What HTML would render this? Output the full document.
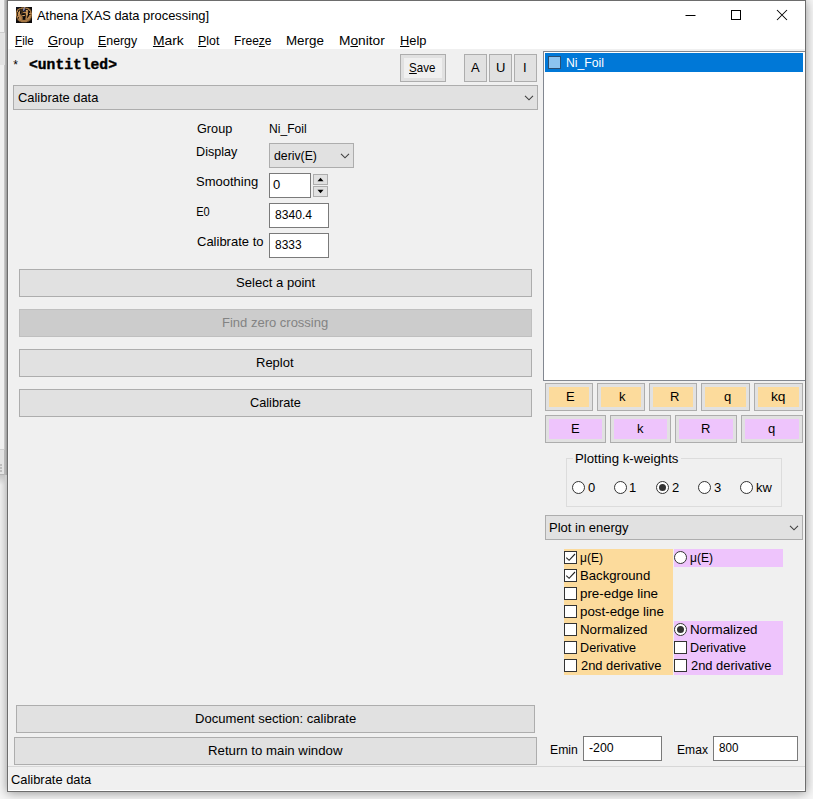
<!DOCTYPE html>
<html><head><meta charset="utf-8"><title>Athena [XAS data processing]</title>
<style>
*{box-sizing:border-box;margin:0;padding:0}
html,body{width:813px;height:799px;overflow:hidden;background:#f0f0f0}
body{position:relative;font:13px "Liberation Sans",sans-serif;color:#000}
.a{position:absolute}
.t{position:absolute;white-space:pre;line-height:16px;height:16px}
.btn{position:absolute;background:#e1e1e1;border:1px solid #adadad}
.btn.dis{background:#cccccc;border-color:#bfbfbf}
.inp{position:absolute;background:#fff;border:1px solid #7a7a7a}
.cmb{position:absolute;background:#e1e1e1;border:1px solid #adadad}
.cb{position:absolute;width:13px;height:13px;background:#fff;border:1px solid #333}
.rd{position:absolute;width:13px;height:13px;background:#fff;border:1px solid #333;border-radius:50%}
.dot{position:absolute;left:2px;top:2px;width:7px;height:7px;border-radius:50%;background:#333}
u{text-decoration:underline;text-underline-offset:1px;text-decoration-thickness:1px}
</style></head>
<body>
<div class="a" style="left:0;top:0;width:813px;height:799px;background:#f6f6f6"></div>
<div class="a" style="left:7px;top:0;width:799px;height:792px;border:1px solid #6d6d6d;background:#f0f0f0;box-shadow:0 1px 10px rgba(0,0,0,.4)"></div>
<div class="a" style="left:8px;top:49px;width:797px;height:742px;border:1px solid #fff;border-top:0;border-left-color:#f6f6f6;border-right-color:#f4f4f4"></div>
<div class="a" style="left:0;top:0;width:5px;height:475px;background:#f0f0f0;border-right:1px solid #c6c6c6"></div>
<div class="a" style="left:0;top:32px;width:5px;height:33px;background:#e3e3e3;border-top:1px solid #cdcdcd"></div>
<div class="a" style="left:0;top:449px;width:5px;height:26px;background:#e3e3e3;border-top:1px solid #d0d0d0;border-bottom:1px solid #b4b4b4;border-right:1px solid #b8b8b8"></div>
<div class="a" style="left:0;top:464px;width:2px;height:2px;background:#bdbdbd"></div>
<div class="a" style="left:0;top:467px;width:2px;height:2px;background:#bdbdbd"></div>
<div class="a" style="left:0;top:470px;width:2px;height:2px;background:#bdbdbd"></div>
<div class="a" style="left:0;top:475px;width:5px;height:10px;background:linear-gradient(to bottom,#c6c6c6,rgba(230,230,230,0))"></div>
<div class="a" style="left:5px;top:0;width:1px;height:475px;background:#b4b4b4"></div>
<div class="a" style="left:6px;top:0;width:1px;height:475px;background:#a2a2a2"></div>
<div class="a" style="left:8px;top:1px;width:797px;height:48px;background:#fff"></div>
<svg class="a" style="left:16px;top:7px" width="16" height="16" viewBox="0 0 16 16" shape-rendering="crispEdges"><rect width="16" height="16" fill="#0c0a0c"/><rect x="0" y="0" width="4" height="1" fill="#12121a"/><rect x="5" y="0" width="1" height="1" fill="#523920"/><rect x="6" y="0" width="2" height="1" fill="#70502c"/><rect x="8" y="0" width="1" height="1" fill="#8a8290"/><rect x="9" y="0" width="1" height="1" fill="#70502c"/><rect x="10" y="0" width="2" height="1" fill="#382918"/><rect x="0" y="1" width="2" height="1" fill="#12121a"/><rect x="2" y="1" width="1" height="1" fill="#382918"/><rect x="3" y="1" width="2" height="1" fill="#8c6636"/><rect x="5" y="1" width="1" height="1" fill="#a67744"/><rect x="6" y="1" width="1" height="1" fill="#8c6636"/><rect x="7" y="1" width="2" height="1" fill="#8a8290"/><rect x="9" y="1" width="1" height="1" fill="#70502c"/><rect x="10" y="1" width="2" height="1" fill="#a67744"/><rect x="12" y="1" width="1" height="1" fill="#8c6636"/><rect x="13" y="1" width="1" height="1" fill="#382918"/><rect x="1" y="2" width="1" height="1" fill="#70502c"/><rect x="2" y="2" width="1" height="1" fill="#a67744"/><rect x="3" y="2" width="1" height="1" fill="#70502c"/><rect x="4" y="2" width="3" height="1" fill="#382918"/><rect x="7" y="2" width="1" height="1" fill="#8a8290"/><rect x="8" y="2" width="1" height="1" fill="#6f6c8c"/><rect x="9" y="2" width="2" height="1" fill="#251c13"/><rect x="11" y="2" width="1" height="1" fill="#382918"/><rect x="12" y="2" width="1" height="1" fill="#a67744"/><rect x="13" y="2" width="1" height="1" fill="#8c6636"/><rect x="14" y="2" width="1" height="1" fill="#523920"/><rect x="0" y="3" width="1" height="1" fill="#382918"/><rect x="1" y="3" width="1" height="1" fill="#a67744"/><rect x="2" y="3" width="1" height="1" fill="#382918"/><rect x="3" y="3" width="1" height="1" fill="#523920"/><rect x="4" y="3" width="3" height="1" fill="#382918"/><rect x="7" y="3" width="1" height="1" fill="#6f6c8c"/><rect x="8" y="3" width="2" height="1" fill="#2c2c48"/><rect x="10" y="3" width="1" height="1" fill="#c9ab62"/><rect x="11" y="3" width="1" height="1" fill="#b98752"/><rect x="12" y="3" width="1" height="1" fill="#382918"/><rect x="13" y="3" width="1" height="1" fill="#a67744"/><rect x="14" y="3" width="1" height="1" fill="#8c6636"/><rect x="15" y="3" width="1" height="1" fill="#251c13"/><rect x="0" y="4" width="1" height="1" fill="#70502c"/><rect x="1" y="4" width="1" height="1" fill="#b98752"/><rect x="2" y="4" width="1" height="1" fill="#251c13"/><rect x="3" y="4" width="1" height="1" fill="#d09d5c"/><rect x="4" y="4" width="1" height="1" fill="#251c13"/><rect x="5" y="4" width="2" height="1" fill="#382918"/><rect x="7" y="4" width="1" height="1" fill="#251c13"/><rect x="8" y="4" width="1" height="1" fill="#2c2c48"/><rect x="9" y="4" width="1" height="1" fill="#523920"/><rect x="10" y="4" width="2" height="1" fill="#b98752"/><rect x="12" y="4" width="1" height="1" fill="#251c13"/><rect x="14" y="4" width="1" height="1" fill="#a67744"/><rect x="15" y="4" width="1" height="1" fill="#523920"/><rect x="0" y="5" width="1" height="1" fill="#8c6636"/><rect x="1" y="5" width="1" height="1" fill="#382918"/><rect x="2" y="5" width="1" height="1" fill="#b98752"/><rect x="3" y="5" width="1" height="1" fill="#d09d5c"/><rect x="5" y="5" width="1" height="1" fill="#382918"/><rect x="6" y="5" width="1" height="1" fill="#523920"/><rect x="7" y="5" width="1" height="1" fill="#a67744"/><rect x="8" y="5" width="2" height="1" fill="#b98752"/><rect x="10" y="5" width="1" height="1" fill="#d09d5c"/><rect x="11" y="5" width="1" height="1" fill="#b98752"/><rect x="12" y="5" width="2" height="1" fill="#251c13"/><rect x="14" y="5" width="1" height="1" fill="#a67744"/><rect x="15" y="5" width="1" height="1" fill="#70502c"/><rect x="0" y="6" width="1" height="1" fill="#a67744"/><rect x="1" y="6" width="1" height="1" fill="#382918"/><rect x="2" y="6" width="1" height="1" fill="#b98752"/><rect x="3" y="6" width="1" height="1" fill="#d09d5c"/><rect x="4" y="6" width="1" height="1" fill="#251c13"/><rect x="5" y="6" width="1" height="1" fill="#523920"/><rect x="6" y="6" width="1" height="1" fill="#382918"/><rect x="7" y="6" width="2" height="1" fill="#251c13"/><rect x="9" y="6" width="1" height="1" fill="#523920"/><rect x="10" y="6" width="1" height="1" fill="#d09d5c"/><rect x="11" y="6" width="1" height="1" fill="#b98752"/><rect x="13" y="6" width="2" height="1" fill="#b98752"/><rect x="15" y="6" width="1" height="1" fill="#a67744"/><rect x="0" y="7" width="1" height="1" fill="#a67744"/><rect x="1" y="7" width="1" height="1" fill="#382918"/><rect x="2" y="7" width="1" height="1" fill="#d09d5c"/><rect x="3" y="7" width="1" height="1" fill="#b98752"/><rect x="4" y="7" width="1" height="1" fill="#70502c"/><rect x="5" y="7" width="1" height="1" fill="#382918"/><rect x="8" y="7" width="1" height="1" fill="#251c13"/><rect x="9" y="7" width="1" height="1" fill="#382918"/><rect x="10" y="7" width="1" height="1" fill="#d09d5c"/><rect x="11" y="7" width="1" height="1" fill="#b98752"/><rect x="13" y="7" width="1" height="1" fill="#251c13"/><rect x="14" y="7" width="1" height="1" fill="#70502c"/><rect x="15" y="7" width="1" height="1" fill="#8c6636"/><rect x="0" y="8" width="1" height="1" fill="#a67744"/><rect x="1" y="8" width="1" height="1" fill="#382918"/><rect x="2" y="8" width="2" height="1" fill="#b98752"/><rect x="4" y="8" width="1" height="1" fill="#a67744"/><rect x="5" y="8" width="1" height="1" fill="#70502c"/><rect x="6" y="8" width="1" height="1" fill="#a67744"/><rect x="7" y="8" width="1" height="1" fill="#d09d5c"/><rect x="8" y="8" width="1" height="1" fill="#b98752"/><rect x="9" y="8" width="1" height="1" fill="#382918"/><rect x="10" y="8" width="1" height="1" fill="#b98752"/><rect x="11" y="8" width="1" height="1" fill="#70502c"/><rect x="13" y="8" width="1" height="1" fill="#a67744"/><rect x="14" y="8" width="1" height="1" fill="#b98752"/><rect x="15" y="8" width="1" height="1" fill="#8c6636"/><rect x="0" y="9" width="1" height="1" fill="#70502c"/><rect x="1" y="9" width="1" height="1" fill="#a67744"/><rect x="2" y="9" width="2" height="1" fill="#b98752"/><rect x="4" y="9" width="2" height="1" fill="#a67744"/><rect x="6" y="9" width="1" height="1" fill="#523920"/><rect x="7" y="9" width="1" height="1" fill="#251c13"/><rect x="9" y="9" width="1" height="1" fill="#382918"/><rect x="10" y="9" width="1" height="1" fill="#a67744"/><rect x="11" y="9" width="1" height="1" fill="#382918"/><rect x="12" y="9" width="1" height="1" fill="#523920"/><rect x="13" y="9" width="1" height="1" fill="#b98752"/><rect x="14" y="9" width="1" height="1" fill="#a67744"/><rect x="15" y="9" width="1" height="1" fill="#70502c"/><rect x="0" y="10" width="1" height="1" fill="#523920"/><rect x="1" y="10" width="1" height="1" fill="#a67744"/><rect x="2" y="10" width="1" height="1" fill="#382918"/><rect x="3" y="10" width="2" height="1" fill="#b98752"/><rect x="5" y="10" width="1" height="1" fill="#a67744"/><rect x="6" y="10" width="1" height="1" fill="#70502c"/><rect x="9" y="10" width="1" height="1" fill="#523920"/><rect x="10" y="10" width="1" height="1" fill="#a67744"/><rect x="11" y="10" width="1" height="1" fill="#382918"/><rect x="12" y="10" width="2" height="1" fill="#b98752"/><rect x="14" y="10" width="1" height="1" fill="#a67744"/><rect x="15" y="10" width="1" height="1" fill="#523920"/><rect x="0" y="11" width="1" height="1" fill="#251c13"/><rect x="1" y="11" width="2" height="1" fill="#70502c"/><rect x="3" y="11" width="2" height="1" fill="#b98752"/><rect x="5" y="11" width="1" height="1" fill="#a67744"/><rect x="6" y="11" width="1" height="1" fill="#70502c"/><rect x="9" y="11" width="1" height="1" fill="#70502c"/><rect x="10" y="11" width="2" height="1" fill="#a67744"/><rect x="12" y="11" width="1" height="1" fill="#b98752"/><rect x="13" y="11" width="1" height="1" fill="#a67744"/><rect x="14" y="11" width="1" height="1" fill="#70502c"/><rect x="15" y="11" width="1" height="1" fill="#251c13"/><rect x="1" y="12" width="1" height="1" fill="#523920"/><rect x="2" y="12" width="2" height="1" fill="#a67744"/><rect x="4" y="12" width="1" height="1" fill="#b98752"/><rect x="5" y="12" width="1" height="1" fill="#a67744"/><rect x="6" y="12" width="1" height="1" fill="#70502c"/><rect x="7" y="12" width="2" height="1" fill="#251c13"/><rect x="9" y="12" width="1" height="1" fill="#70502c"/><rect x="10" y="12" width="3" height="1" fill="#a67744"/><rect x="13" y="12" width="1" height="1" fill="#8c6636"/><rect x="14" y="12" width="1" height="1" fill="#523920"/><rect x="1" y="13" width="1" height="1" fill="#251c13"/><rect x="2" y="13" width="1" height="1" fill="#70502c"/><rect x="3" y="13" width="9" height="1" fill="#a67744"/><rect x="12" y="13" width="1" height="1" fill="#8c6636"/><rect x="13" y="13" width="1" height="1" fill="#70502c"/><rect x="14" y="13" width="1" height="1" fill="#251c13"/><rect x="3" y="14" width="1" height="1" fill="#523920"/><rect x="4" y="14" width="1" height="1" fill="#70502c"/><rect x="5" y="14" width="6" height="1" fill="#a67744"/><rect x="11" y="14" width="1" height="1" fill="#70502c"/><rect x="12" y="14" width="1" height="1" fill="#523920"/><rect x="5" y="15" width="1" height="1" fill="#251c13"/><rect x="6" y="15" width="4" height="1" fill="#382918"/><rect x="10" y="15" width="1" height="1" fill="#251c13"/></svg>
<div class="t" style="left:37px;top:8px;transform:scaleX(0.992);transform-origin:0px 0">Athena [XAS data processing]</div>
<svg class="a" style="left:667px;top:1px" width="138" height="29" viewBox="0 0 138 29" fill="none" stroke="#000" stroke-width="1"><path d="M18.5 14.5h10"/><rect x="64.5" y="9.5" width="9" height="9"/><path d="M110 9l10 10M120 9l-10 10" stroke-width="1.05"/></svg>
<div class="t" style="left:15px;top:33px;transform:scaleX(0.890);transform-origin:1px 0"><u>F</u>ile</div>
<div class="t" style="left:48px;top:33px;transform:scaleX(0.994);transform-origin:0px 0"><u>G</u>roup</div>
<div class="t" style="left:98px;top:33px;transform:scaleX(0.949);transform-origin:1px 0"><u>E</u>nergy</div>
<div class="t" style="left:153px;top:33px;transform:scaleX(1.068);transform-origin:1px 0"><u>M</u>ark</div>
<div class="t" style="left:198px;top:33px;transform:scaleX(0.950);transform-origin:1px 0"><u>P</u>lot</div>
<div class="t" style="left:234px;top:33px;transform:scaleX(0.926);transform-origin:1px 0">Free<u>z</u>e</div>
<div class="t" style="left:286px;top:33px;transform:scaleX(1.028);transform-origin:1px 0">Mer<u>g</u>e</div>
<div class="t" style="left:339px;top:33px;transform:scaleX(1.056);transform-origin:1px 0">M<u>o</u>nitor</div>
<div class="t" style="left:400px;top:33px;transform:scaleX(0.988);transform-origin:1px 0"><u>H</u>elp</div>
<div class="t" style="left:12px;top:58px;font:12px 'Liberation Mono',monospace;line-height:16px">*</div>
<div class="t" style="left:29px;top:57px;font:bold 14.67px 'Liberation Mono',monospace;line-height:16px;-webkit-text-stroke:0.4px #000">&lt;untitled&gt;</div>
<div class="btn" style="left:400px;top:54px;width:46px;height:28px"><div class="a" style="left:3px;top:3px;width:38px;height:20px;background:#f0f0f0"></div></div>
<div class="t" style="left:409px;top:60px;transform:scaleX(0.886);transform-origin:1px 0"><u>S</u>ave</div>
<div class="btn" style="left:464px;top:54px;width:23px;height:28px"></div>
<div class="t" style="left:471px;top:60px">A</div>
<div class="btn" style="left:489px;top:54px;width:23px;height:28px"></div>
<div class="t" style="left:496px;top:60px">U</div>
<div class="btn" style="left:514px;top:54px;width:23px;height:28px"></div>
<div class="t" style="left:523px;top:60px">I</div>
<div class="cmb" style="left:13px;top:85px;width:525px;height:25px"></div>
<div class="t" style="left:18px;top:90px;transform:scaleX(0.993);transform-origin:0px 0">Calibrate data</div>
<svg class="a" style="left:524px;top:95px" width="10" height="6" viewBox="0 0 10 6" fill="none" stroke="#404040" stroke-width="1.1"><path d="M1 0.8l4 4 4-4"/></svg>
<div class="t" style="left:197px;top:121px;transform:scaleX(0.975);transform-origin:0px 0">Group</div>
<div class="t" style="left:269px;top:121px;transform:scaleX(0.928);transform-origin:1px 0">Ni_Foil</div>
<div class="t" style="left:196px;top:144px;transform:scaleX(0.969);transform-origin:1px 0">Display</div>
<div class="cmb" style="left:269px;top:143px;width:85px;height:25px"></div>
<div class="t" style="left:274px;top:148px;transform:scaleX(0.944);transform-origin:0px 0">deriv(E)</div>
<svg class="a" style="left:340px;top:153px" width="10" height="6" viewBox="0 0 10 6" fill="none" stroke="#404040" stroke-width="1.1"><path d="M1 0.8l4 4 4-4"/></svg>
<div class="t" style="left:196px;top:174px">Smoothing</div>
<div class="inp" style="left:269px;top:173px;width:42px;height:25px"></div>
<div class="t" style="left:273px;top:177px">0</div>
<div class="btn" style="left:313px;top:174px;width:15px;height:11px"><svg class="a" style="left:3px;top:2px" width="7" height="5" viewBox="0 0 7 5"><path d="M0.5 4.2l3-3.4 3 3.4z" fill="#000"/></svg></div>
<div class="btn" style="left:313px;top:186px;width:15px;height:11px"><svg class="a" style="left:3px;top:2px" width="7" height="5" viewBox="0 0 7 5"><path d="M0.5 0.8l3 3.4 3-3.4z" fill="#000"/></svg></div>
<div class="t" style="left:196px;top:204px;transform:scaleX(0.850);transform-origin:1px 0">E0</div>
<div class="inp" style="left:269px;top:203px;width:60px;height:25px"></div>
<div class="t" style="left:275px;top:207px;transform:scaleX(0.930);transform-origin:0px 0">8340.4</div>
<div class="t" style="left:197px;top:234px">Calibrate to</div>
<div class="inp" style="left:269px;top:233px;width:60px;height:25px"></div>
<div class="t" style="left:275px;top:237px;transform:scaleX(0.917);transform-origin:0px 0">8333</div>
<div class="btn" style="left:19px;top:269px;width:513px;height:28px"></div>
<div class="t" style="left:236px;top:275px;transform:scaleX(1.006);transform-origin:1px 0">Select a point</div>
<div class="btn dis" style="left:19px;top:309px;width:513px;height:28px"></div>
<div class="t" style="left:222px;top:315px;color:#838383">Find zero crossing</div>
<div class="btn" style="left:19px;top:349px;width:513px;height:28px"></div>
<div class="t" style="left:256px;top:355px">Replot</div>
<div class="btn" style="left:19px;top:389px;width:513px;height:28px"></div>
<div class="t" style="left:250px;top:395px;transform:scaleX(0.979);transform-origin:0px 0">Calibrate</div>
<div class="btn" style="left:16px;top:705px;width:519px;height:28px"></div>
<div class="t" style="left:195px;top:711px;transform:scaleX(1.005);transform-origin:1px 0">Document section: calibrate</div>
<div class="btn" style="left:14px;top:737px;width:523px;height:28px"></div>
<div class="t" style="left:208px;top:743px;transform:scaleX(1.017);transform-origin:1px 0">Return to main window</div>
<div class="a" style="left:543px;top:51px;width:262px;height:330px;background:#fff;border:1px solid #828790;border-right:0"></div>
<div class="a" style="left:545px;top:53px;width:258px;height:19px;background:#0078d7"></div>
<div class="a" style="left:548px;top:56px;width:13px;height:13px;background:#8cc4f0;border:1px solid #2b4f73"></div>
<div class="t" style="left:566px;top:55px;transform:scaleX(0.938);transform-origin:1px 0;color:#fff">Ni_Foil</div>
<div class="btn" style="left:545px;top:383px;width:48px;height:28px"><div class="a" style="left:3px;top:3px;right:3px;bottom:3px;background:#fcdb9c"></div></div>
<div class="t" style="left:566px;top:389px">E</div>
<div class="btn" style="left:597px;top:383px;width:48px;height:28px"><div class="a" style="left:3px;top:3px;right:3px;bottom:3px;background:#fcdb9c"></div></div>
<div class="t" style="left:619px;top:389px">k</div>
<div class="btn" style="left:649px;top:383px;width:48px;height:28px"><div class="a" style="left:3px;top:3px;right:3px;bottom:3px;background:#fcdb9c"></div></div>
<div class="t" style="left:670px;top:389px">R</div>
<div class="btn" style="left:701px;top:383px;width:49px;height:28px"><div class="a" style="left:3px;top:3px;right:3px;bottom:3px;background:#fcdb9c"></div></div>
<div class="t" style="left:724px;top:389px">q</div>
<div class="btn" style="left:754px;top:383px;width:49px;height:28px"><div class="a" style="left:3px;top:3px;right:3px;bottom:3px;background:#fcdb9c"></div></div>
<div class="t" style="left:771px;top:389px;transform:scaleX(1.058);transform-origin:1px 0">kq</div>
<div class="btn" style="left:545px;top:415px;width:61px;height:28px"><div class="a" style="left:3px;top:3px;right:3px;bottom:3px;background:#eec4fc"></div></div>
<div class="t" style="left:571px;top:421px">E</div>
<div class="btn" style="left:610px;top:415px;width:61px;height:28px"><div class="a" style="left:3px;top:3px;right:3px;bottom:3px;background:#eec4fc"></div></div>
<div class="t" style="left:637px;top:421px">k</div>
<div class="btn" style="left:675px;top:415px;width:62px;height:28px"><div class="a" style="left:3px;top:3px;right:3px;bottom:3px;background:#eec4fc"></div></div>
<div class="t" style="left:701px;top:421px">R</div>
<div class="btn" style="left:741px;top:415px;width:62px;height:28px"><div class="a" style="left:3px;top:3px;right:3px;bottom:3px;background:#eec4fc"></div></div>
<div class="t" style="left:768px;top:421px">q</div>
<div class="a" style="left:566px;top:458px;width:216px;height:49px;border:1px solid #dcdcdc"></div>
<div class="a" style="left:573px;top:456px;width:108px;height:5px;background:#f0f0f0"></div>
<div class="t" style="left:575px;top:451px;transform:scaleX(1.015);transform-origin:1px 0">Plotting k-weights</div>
<div class="rd" style="left:572px;top:481px"></div>
<div class="t" style="left:588px;top:480px">0</div>
<div class="rd" style="left:614px;top:481px"></div>
<div class="t" style="left:629px;top:480px">1</div>
<div class="rd" style="left:656px;top:481px"><div class="dot"></div></div>
<div class="t" style="left:672px;top:480px">2</div>
<div class="rd" style="left:698px;top:481px"></div>
<div class="t" style="left:714px;top:480px">3</div>
<div class="rd" style="left:740px;top:481px"></div>
<div class="t" style="left:756px;top:480px;transform:scaleX(0.993);transform-origin:1px 0">kw</div>
<div class="cmb" style="left:545px;top:515px;width:258px;height:25px"></div>
<div class="t" style="left:549px;top:520px">Plot in energy</div>
<svg class="a" style="left:789px;top:525px" width="10" height="6" viewBox="0 0 10 6" fill="none" stroke="#404040" stroke-width="1.1"><path d="M1 0.8l4 4 4-4"/></svg>
<div class="a" style="left:564px;top:549px;width:109px;height:126px;background:#fcdb9c"></div>
<div class="a" style="left:674px;top:549px;width:109px;height:18px;background:#eec4fc"></div>
<div class="a" style="left:674px;top:621px;width:109px;height:54px;background:#eec4fc"></div>
<div class="cb" style="left:564px;top:551px"><svg class="a" style="left:0;top:0" width="11" height="11" viewBox="0 0 11 11" fill="none" stroke="#222" stroke-width="1.1"><path d="M1.3 5.7l2.8 2.6 5.9-6.3"/></svg></div>
<div class="t" style="left:580px;top:550px;transform:scaleX(0.926);transform-origin:1px 0">μ(E)</div>
<div class="cb" style="left:564px;top:569px"><svg class="a" style="left:0;top:0" width="11" height="11" viewBox="0 0 11 11" fill="none" stroke="#222" stroke-width="1.1"><path d="M1.3 5.7l2.8 2.6 5.9-6.3"/></svg></div>
<div class="t" style="left:580px;top:568px;transform:scaleX(1.013);transform-origin:1px 0">Background</div>
<div class="cb" style="left:564px;top:587px"></div>
<div class="t" style="left:580px;top:586px;transform:scaleX(1.029);transform-origin:1px 0">pre-edge line</div>
<div class="cb" style="left:564px;top:605px"></div>
<div class="t" style="left:580px;top:604px;transform:scaleX(1.028);transform-origin:1px 0">post-edge line</div>
<div class="cb" style="left:564px;top:623px"></div>
<div class="t" style="left:580px;top:622px;transform:scaleX(1.028);transform-origin:1px 0">Normalized</div>
<div class="cb" style="left:564px;top:641px"></div>
<div class="t" style="left:580px;top:640px;transform:scaleX(0.970);transform-origin:1px 0">Derivative</div>
<div class="cb" style="left:564px;top:659px"></div>
<div class="t" style="left:581px;top:658px;transform:scaleX(0.993);transform-origin:0px 0">2nd derivative</div>
<div class="rd" style="left:674px;top:551px"></div>
<div class="t" style="left:690px;top:550px;transform:scaleX(0.926);transform-origin:1px 0">μ(E)</div>
<div class="rd" style="left:674px;top:623px"><div class="dot"></div></div>
<div class="t" style="left:690px;top:622px;transform:scaleX(1.028);transform-origin:1px 0">Normalized</div>
<div class="cb" style="left:674px;top:641px"></div>
<div class="t" style="left:690px;top:640px;transform:scaleX(0.970);transform-origin:1px 0">Derivative</div>
<div class="cb" style="left:674px;top:659px"></div>
<div class="t" style="left:691px;top:658px;transform:scaleX(0.993);transform-origin:0px 0">2nd derivative</div>
<div class="t" style="left:550px;top:742px;transform:scaleX(0.939);transform-origin:1px 0">Emin</div>
<div class="inp" style="left:583px;top:736px;width:79px;height:25px"></div>
<div class="t" style="left:589px;top:740px;transform:scaleX(0.946);transform-origin:0px 0">-200</div>
<div class="t" style="left:677px;top:742px;transform:scaleX(0.928);transform-origin:1px 0">Emax</div>
<div class="inp" style="left:713px;top:736px;width:85px;height:25px"></div>
<div class="t" style="left:719px;top:740px;transform:scaleX(0.895);transform-origin:0px 0">800</div>
<div class="a" style="left:8px;top:766px;width:797px;height:1px;background:#d7d7d7"></div>
<div class="t" style="left:11px;top:772px;transform:scaleX(0.991);transform-origin:0px 0">Calibrate data</div>
</body></html>
